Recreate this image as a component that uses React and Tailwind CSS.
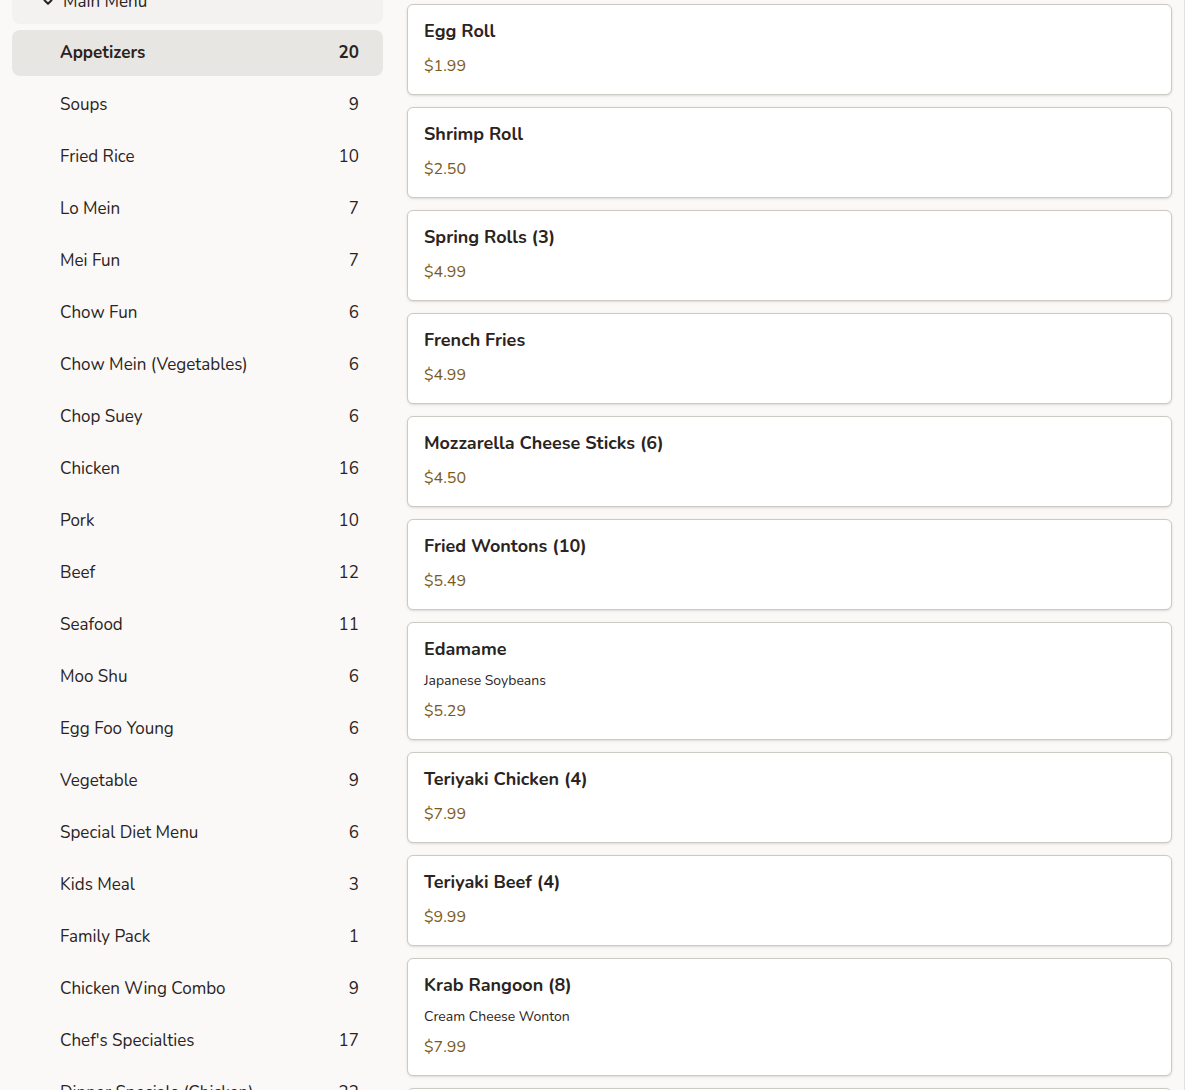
import React from 'react';
import { ChevronDown } from 'lucide-react';

const categories = [
    ['Appetizers', 20],
    ['Soups', 9],
    ['Fried Rice', 10],
    ['Lo Mein', 7],
    ['Mei Fun', 7],
    ['Chow Fun', 6],
    ['Chow Mein (Vegetables)', 6],
    ['Chop Suey', 6],
    ['Chicken', 16],
    ['Pork', 10],
    ['Beef', 12],
    ['Seafood', 11],
    ['Moo Shu', 6],
    ['Egg Foo Young', 6],
    ['Vegetable', 9],
    ['Special Diet Menu', 6],
    ['Kids Meal', 3],
    ['Family Pack', 1],
    ['Chicken Wing Combo', 9],
    ["Chef's Specialties", 17],
    ['Dinner Specials (Chicken)', 22],
];

const items = [
    { name: 'Egg Roll', price: '$1.99' },
    { name: 'Shrimp Roll', price: '$2.50' },
    { name: 'Spring Rolls (3)', price: '$4.99' },
    { name: 'French Fries', price: '$4.99' },
    { name: 'Mozzarella Cheese Sticks (6)', price: '$4.50' },
    { name: 'Fried Wontons (10)', price: '$5.49' },
    { name: 'Edamame', desc: 'Japanese Soybeans', price: '$5.29' },
    { name: 'Teriyaki Chicken (4)', price: '$7.99' },
    { name: 'Teriyaki Beef (4)', price: '$9.99' },
    { name: 'Krab Rangoon (8)', desc: 'Cream Cheese Wonton', price: '$7.99' },
    { name: 'Chicken Wings (4)', price: '$6.99' },
];

export default function App() {
    return (
        <div className="h-[1090px] w-[1204px] overflow-hidden bg-white font-['Nunito','Lato',sans-serif] text-[#2b231d]">
            <div className="flex w-[1185px] h-full border-r border-[#e4e2df] bg-[#faf9f7]">
                {/* Sidebar */}
                <aside className="w-[371px] ml-3 mt-[-21px] flex flex-col gap-[6px] shrink-0">
                    <div className="h-[45px] shrink-0 flex items-center gap-2 pl-[29px] rounded-lg bg-[#f3f2f0] text-[17px]">
                        <ChevronDown className="w-[14px] h-[14px]" strokeWidth={3.5} />
                        <span>Main Menu</span>
                    </div>
                    {categories.map(([name, count], i) => (
                        <div
                            key={name}
                            className={
                                i === 0
                                    ? 'h-[46px] shrink-0 flex items-center justify-between pl-12 pr-6 rounded-lg bg-[#e8e6e3] text-[17px] font-bold'
                                    : 'h-[46px] shrink-0 flex items-center justify-between pl-12 pr-6 rounded-lg text-[17px]'
                            }
                        >
                            <span>{name}</span>
                            <span>{count}</span>
                        </div>
                    ))}
                </aside>

                {/* Items */}
                <main className="ml-6 mt-1 w-[765px] flex flex-col gap-3">
                    {items.map((item) => (
                        <div
                            key={item.name}
                            className="shrink-0 bg-white border border-[#cdc9c4] rounded-md shadow-sm px-4 pt-[14px] pb-[17px]"
                        >
                            <h3 className="text-[18px] leading-6 font-bold">{item.name}</h3>
                            {item.desc && (
                                <p className="mt-[11px] text-[14px] leading-[18px]">{item.desc}</p>
                            )}
                            <p className={item.desc ? 'mt-[10px] text-[16px] leading-[22px] text-[#7b5a1c]' : 'mt-3 text-[16px] leading-[22px] text-[#7b5a1c]'}>
                                {item.price}
                            </p>
                        </div>
                    ))}
                </main>
            </div>
        </div>
    );
}
